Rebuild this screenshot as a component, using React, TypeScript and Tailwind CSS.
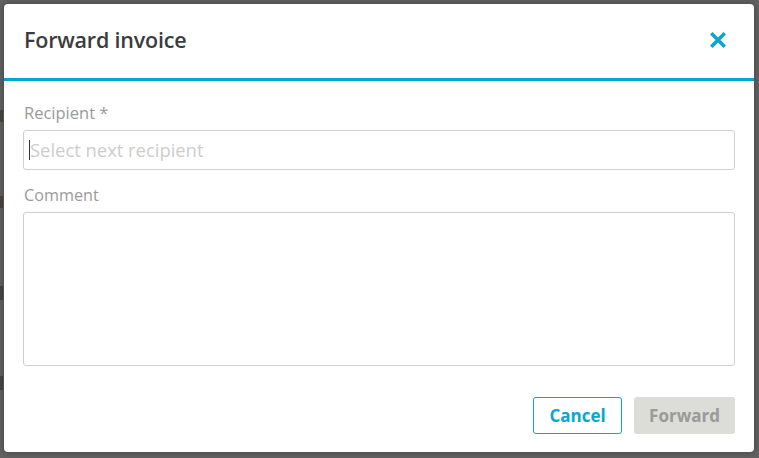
import React from "react";

export default function App() {
  return (
    <div
      className="w-[759px] h-[458px] bg-[#616161] pt-[4px] pl-[4px] overflow-hidden relative"
      style={{ fontFamily: '"Open Sans", "Noto Sans", sans-serif' }}
    >
      <div className="absolute left-0 top-[110px] w-[3px] h-[12px] bg-[#3a2a1a] opacity-50" />
      <div className="absolute left-0 top-[196px] w-[3px] h-[12px] bg-[#3a2a1a] opacity-50" />
      <div className="absolute left-0 top-[286px] w-[3px] h-[14px] bg-[#2a2a2a] opacity-50" />
      <div className="absolute left-0 top-[376px] w-[3px] h-[14px] bg-[#2a2a2a] opacity-50" />
      <div className="w-[750px] h-[448px] bg-white rounded-[4px] flex flex-col relative shadow-[0_0_6px_rgba(0,0,0,0.35)]">
        <div className="h-[74px] flex items-center justify-between pl-[20px] pr-[28px] pb-[2px]">
          <h1 className="text-[21.5px] font-semibold text-[#3c3c3c] tracking-[-0.2px]">Forward invoice</h1>
          <svg width="16" height="16" viewBox="0 0 16 16">
            <path d="M2.5 2.5 L13.5 13.5 M13.5 2.5 L2.5 13.5" stroke="#0aa6cf" strokeWidth="3.6" strokeLinecap="square" />
          </svg>
        </div>
        <div className="h-[3px] bg-[#00a8d0]" />
        <div className="flex flex-col px-[19px] pt-[21px]">
          <label className="text-[16.5px] text-[#9a9a9a] leading-[22px] pl-[1px]">Recipient *</label>
          <div className="mt-[6px] h-[40px] border border-[#cfcfcf] rounded-[3px] flex items-center pl-[5px]">
            <div className="w-[1px] h-[20px] bg-[#333]" />
            <span className="text-[18.4px] text-[#cdcdcd]">Select next recipient</span>
          </div>
          <label className="mt-[14px] text-[16.2px] text-[#9a9a9a] leading-[22px] pl-[1px]">Comment</label>
          <div className="mt-[6px] h-[154px] border border-[#cfcfcf] rounded-[3px]" />
          <div className="mt-[31px] flex justify-end gap-[12px]">
            <button className="w-[89px] h-[37px] border border-[#0aa6cf] rounded-[3px] text-[17px] font-bold text-[#0aa6cf]">
              Cancel
            </button>
            <button className="w-[101px] h-[37px] bg-[#dcdcd8] rounded-[3px] text-[17px] font-bold text-[#9a9a9a]">
              Forward
            </button>
          </div>
        </div>
      </div>
    </div>
  );
}
